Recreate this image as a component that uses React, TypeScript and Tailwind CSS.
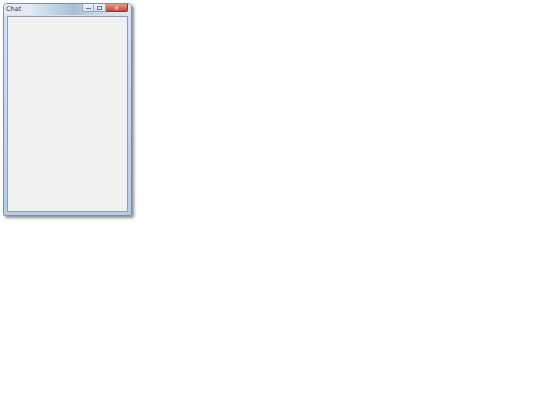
export default function App() {
  return (
    <div className="w-[540px] h-[405px] bg-white pt-[3px] pl-[3px]">
      {/* the little "Chat" window */}
      <div className="w-[129px] h-[213px] flex flex-col rounded-t-[4px] rounded-b-[2px] border border-[#7d8fa6] bg-gradient-to-b from-[#d6e2f0] to-[#b9cbe0] shadow-[2px_2px_3px_rgba(40,50,70,0.55)]">
        <div className="h-[11px] flex items-start rounded-t-[3px] bg-gradient-to-r from-[#e3ebf5] from-20% via-[#a9bfd8] via-55% to-[#dbe5f1] to-85%">
          <span
            className="pl-[2px] pt-[2px] text-[6.5px] leading-[7px] text-[#3a3a3a]"
            style={{ fontFamily: '"DejaVu Sans", sans-serif' }}
          >
            Chat
          </span>
          <div className="ml-auto mr-[3px] flex h-[8px]">
            <div className="w-[12px] flex items-end justify-center pb-[2px] rounded-bl-[2px] border border-t-0 border-[#9aaabd] bg-gradient-to-b from-[#f0f3f8] to-[#d5dee9]">
              <div className="w-[5px] h-[1px] bg-[#6f7b8c]" />
            </div>
            <div className="w-[12px] flex items-center justify-center border border-t-0 border-l-0 border-[#9aaabd] bg-gradient-to-b from-[#f0f3f8] to-[#d5dee9]">
              <div className="w-[5px] h-[4px] border border-[#6f7b8c]" />
            </div>
            <div className="w-[22px] flex items-center justify-center rounded-br-[2px] border border-t-0 border-l-0 border-[#8a3a30] bg-gradient-to-b from-[#e49a8c] to-[#c8452f]">
              <span
                className="text-[6px] leading-[6px] font-bold text-[#f5e0dc]"
                style={{ fontFamily: '"DejaVu Sans", sans-serif' }}
              >
                ×
              </span>
            </div>
          </div>
        </div>
        <div className="flex-1 mt-[1px] mx-[3px] mb-[3px] border border-[#8d9fb6] bg-[#f0f0f0]" />
      </div>
    </div>
  );
}
